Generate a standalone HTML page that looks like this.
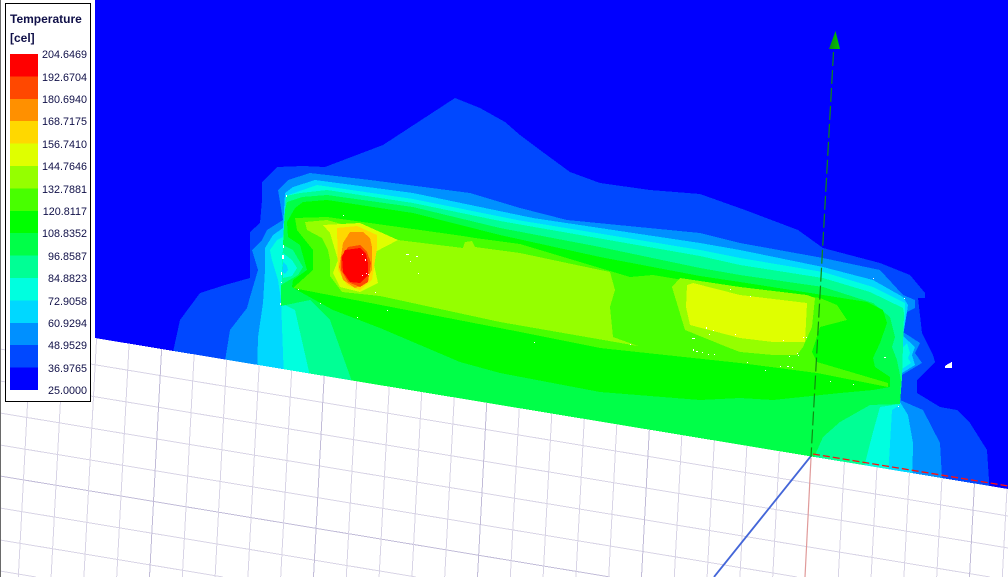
<!DOCTYPE html>
<html lang="en">
<head>
<meta charset="utf-8">
<title>Temperature plot</title>
<style>
html,body{margin:0;padding:0;background:#fff;width:1008px;height:577px;overflow:hidden}
svg{display:block}
.h polygon,.h rect{shape-rendering:crispEdges}
.g line{shape-rendering:crispEdges;stroke:#d8d4e6;stroke-width:1}
.g line.d{stroke:#c2bcd8}
text{font-family:"Liberation Sans",sans-serif;fill:#101048}
.l text{font-size:10.8px;text-anchor:end}
</style>
</head>
<body>
<svg width="1008" height="577" viewBox="0 0 1008 577" xmlns="http://www.w3.org/2000/svg">
<defs>
<clipPath id="fl"><polygon points="0,322 95,338 1008,489 1008,577 0,577"/></clipPath>
<linearGradient id="ah" x1="0" x2="1" y1="0" y2="0"><stop offset="0" stop-color="#0c8c10"/><stop offset="1" stop-color="#00c800"/></linearGradient>
</defs>
<rect width="1008" height="577" fill="#fff"/>
<g class="h">
<rect x="95" y="0" width="913" height="520" fill="#0000ff"/>
<!-- c1 -->
<polygon fill="#0048ff" points="173,370 173,352 180,320 200,293 225,285 250,278 250,232 260,223 262,200 262,182 277,167 303,166 325,167 383,145 455,98 480,108 505,122 520,135 540,150 570,172 600,183 650,190 700,194 745,210 798,230 823,248 880,263 910,275 925,293 925,298 918,298 922,333 933,355 935,362 917,380 917,393 940,407 957,410 970,423 987,450 990,495 700,460"/>
<!-- c2 -->
<polygon fill="#0090ff" points="225,370 225,361 230,330 247,308 250,297 258,270 252,250 262,240 267,230 283,220 278,190 288,180 310,173 370,180 470,193 520,208 567,220 700,233 740,243 823,258 880,270 903,295 915,300 915,308 905,313 903,332 920,343 915,353 922,363 902,375 900,400 923,410 940,443 943,495"/>
<!-- c3 -->
<polygon fill="#00d8ff" points="257,375 258,337 263,303 265,270 265,248 273,235 283,228 285,193 293,187 315,180 413,193 533,218 700,243 740,250 823,267 873,280 903,297 908,305 907,312 903,336 915,347 912,355 915,365 902,373 900,402 908,415 913,443 912,495"/>
<!-- c4 -->
<polygon fill="#00ffdf" points="284,380 281,300 278,280 272,260 270,250 277,240 283,237 288,195 297,192 317,185 413,199 517,220 700,250 740,258 823,272 873,287 905,303 905,312 902,348 907,343 910,353 908,358 911,363 902,369 900,405 892,410 887,495"/>
<!-- c5 -->
<polygon fill="#00ff95" points="312,385 295,310 281,303 283,245 284,228 286,196 300,193 327,190 413,203 500,221 700,256 740,265 823,278 870,292 903,308 904,313 902,378 900,404 880,407 873,432 862,475 700,470"/>
<!-- c3/c4 spot -->
<polygon fill="#00ffdf" points="283,253 292,260 297,268 292,276 283,278"/>
<polygon fill="#00d8ff" points="283,262 287,266 288,270 285,274 282,272"/>
<!-- c6 -->
<polygon fill="#00ff48" points="355,390 340,348 330,320 310,300 281,306 281,285 298,275 303,267 297,257 293,250 283,245 284,225 285,210 287,202 302,197 327,195 413,207 500,228 600,247 700,268 740,275 823,287 873,303 890,317 895,337 892,347 897,360 901,380 900,404 870,405 840,422 823,437 812,462"/>
<!-- c7 -->
<polygon fill="#00ff00" points="297,290 333,310 380,328 460,362 500,373 600,392 700,400 740,398 773,400 840,393 873,390 890,387 890,377 875,367 873,358 880,343 887,323 883,310 867,302 823,295 740,282 700,276 600,257 500,235 413,213 327,200 303,202 295,208 287,222 288,237 300,245 307,270 293,280 292,287"/>
<!-- c8 -->
<polygon fill="#48ff00" points="295,218 327,217 413,229 463,236 475,238 520,244 600,268 630,277 653,275 683,280 740,287 820,298 837,305 847,320 820,327 812,352 817,362 888,383 888,387 817,373 740,363 600,348 510,330 293,288 313,270 313,250 297,230"/>
<!-- c9 -->
<polygon fill="#95ff00" points="305,222 327,220 398,240 463,248 465,242 472,241 475,247 520,253 567,263 610,272 615,290 610,307 613,337 638,346 500,322 380,296 342,292 330,276 330,260 328,250 322,238 307,230"/>
<polygon fill="#95ff00" points="672,287 680,278 740,287 807,295 815,298 812,327 803,347 797,355 773,355 740,352 727,347 685,330"/>
<!-- c10 -->
<polygon fill="#dfff00" points="687,285 693,283 740,295 807,303 805,342 773,342 740,338 690,325 686,307"/>
<polygon fill="#dfff00" points="323,225 360,223 398,240 375,252 373,260 378,283 360,292 340,287 333,273 338,260 330,233"/>
<!-- hot spot -->
<polygon fill="#ffd800" points="337,228 357,226 377,235 377,248 372,280 360,290 347,285 338,270"/>
<polygon fill="#ff9000" points="350,232 363,232 370,238 372,247 372,270 363,285 355,288 343,280 339,267 342,250 343,243"/>
<polygon fill="#ff4800" points="348,247 360,245 367,252 371,263 368,282 360,287 348,282 341,270 341,257"/>
<polygon fill="#ff0000" points="345,250 360,248 366,254 368,263 368,275 360,283 350,282 343,272 342,257"/>
<!-- speckles -->
<g fill="#fff">
<rect x="286" y="195" width="1" height="2"/><rect x="343" y="215" width="1" height="1"/><rect x="283" y="245" width="1" height="3"/><rect x="282" y="255" width="2" height="4"/><rect x="281" y="272" width="1" height="3"/><rect x="281" y="282" width="1" height="1"/><rect x="280" y="303" width="1" height="2"/><rect x="298" y="289" width="1" height="1"/><rect x="320" y="303" width="1" height="1"/><rect x="357" y="317" width="1" height="1"/><rect x="387" y="310" width="1" height="1"/><rect x="362" y="254" width="1" height="1"/><rect x="365" y="259" width="1" height="2"/><rect x="362" y="275" width="1" height="1"/><rect x="366" y="273" width="1" height="1"/><rect x="368" y="274" width="1" height="1"/><rect x="375" y="292" width="1" height="1"/><rect x="406" y="254" width="3" height="1"/><rect x="416" y="256" width="2" height="1"/><rect x="410" y="261" width="1" height="1"/><rect x="418" y="273" width="1" height="1"/><rect x="630" y="344" width="1" height="1"/><rect x="534" y="342" width="1" height="1"/><rect x="693" y="349" width="1" height="2"/><rect x="730" y="289" width="1" height="1"/><rect x="750" y="296" width="1" height="1"/><rect x="706" y="327" width="1" height="2"/><rect x="713" y="330" width="1" height="1"/><rect x="709" y="334" width="1" height="1"/><rect x="692" y="338" width="3" height="1"/><rect x="735" y="334" width="1" height="1"/><rect x="783" y="340" width="1" height="1"/><rect x="696" y="351" width="2" height="1"/><rect x="702" y="352" width="1" height="1"/><rect x="708" y="354" width="1" height="1"/><rect x="714" y="354" width="1" height="1"/><rect x="747" y="362" width="1" height="1"/><rect x="780" y="366" width="1" height="1"/><rect x="787" y="366" width="2" height="1"/><rect x="792" y="367" width="1" height="1"/><rect x="765" y="370" width="1" height="1"/><rect x="830" y="381" width="1" height="1"/><rect x="853" y="384" width="1" height="1"/><rect x="789" y="356" width="1" height="1"/><rect x="798" y="355" width="1" height="1"/><rect x="797" y="353" width="1" height="1"/><rect x="803" y="337" width="1" height="1"/><rect x="806" y="337" width="1" height="1"/><rect x="873" y="278" width="1" height="1"/><rect x="904" y="298" width="1" height="1"/><rect x="884" y="357" width="2" height="1"/><rect x="898" y="406" width="1" height="1"/>
<polygon points="945,366 948,364 950,363 951,362 952,362 952,368 945,368"/>
</g>
</g>
<!-- floor -->
<polygon points="0,322 95,338 1008,489 1008,577 0,577" fill="#fff" style="shape-rendering:crispEdges"/>
<rect x="0" y="0" width="95" height="340" fill="#fff"/>
<g class="g" clip-path="url(#fl)">
<line x1="0" y1="349" x2="1008" y2="516"/><line x1="0" y1="381" x2="1008" y2="548"/><line x1="0" y1="413" x2="990" y2="577"/><line x1="0" y1="445" x2="797" y2="577"/><line class="d" x1="0" y1="476" x2="610" y2="577"/><line x1="0" y1="508" x2="416" y2="577"/><line x1="0" y1="540" x2="223" y2="577"/><line x1="0" y1="571" x2="36" y2="577"/>
<line x1="35.3" y1="257" x2="18.3" y2="577"/><line x1="68.1" y1="257" x2="51.1" y2="577"/><line x1="100.9" y1="257" x2="83.9" y2="577"/><line x1="133.7" y1="257" x2="116.7" y2="577"/><line class="d" x1="166.5" y1="257" x2="149.5" y2="577"/><line x1="199.3" y1="257" x2="182.3" y2="577"/><line x1="232.1" y1="257" x2="215.1" y2="577"/><line x1="264.9" y1="257" x2="247.9" y2="577"/><line x1="297.7" y1="257" x2="280.7" y2="577"/><line class="d" x1="330.5" y1="257" x2="313.5" y2="577"/><line x1="363.3" y1="257" x2="346.3" y2="577"/><line x1="396.1" y1="257" x2="379.1" y2="577"/><line x1="428.9" y1="257" x2="411.9" y2="577"/><line x1="461.7" y1="257" x2="444.7" y2="577"/><line class="d" x1="494.5" y1="257" x2="477.5" y2="577"/><line x1="527.3" y1="257" x2="510.3" y2="577"/><line x1="560.1" y1="257" x2="543.1" y2="577"/><line x1="592.9" y1="257" x2="575.9" y2="577"/><line x1="625.7" y1="257" x2="608.7" y2="577"/><line class="d" x1="658.5" y1="257" x2="641.5" y2="577"/><line x1="691.3" y1="257" x2="674.3" y2="577"/><line x1="724.1" y1="257" x2="707.1" y2="577"/><line x1="756.9" y1="257" x2="739.9" y2="577"/><line x1="789.7" y1="257" x2="772.7" y2="577"/><line x1="855.3" y1="257" x2="838.3" y2="577"/><line x1="888.1" y1="257" x2="871.1" y2="577"/><line x1="920.9" y1="257" x2="903.9" y2="577"/><line x1="953.7" y1="257" x2="936.7" y2="577"/><line class="d" x1="986.5" y1="257" x2="969.5" y2="577"/><line x1="1008" y1="470" x2="1002.3" y2="577"/>
</g>
<!-- axes -->
<line x1="811" y1="458" x2="805" y2="577" stroke="#e09a9a" stroke-width="1.2"/>
<line x1="811" y1="456" x2="714" y2="577" stroke="#4466d8" stroke-width="1.8"/>
<line x1="813" y1="454" x2="1008" y2="486" stroke="#ff0f0f" stroke-width="1.3" stroke-dasharray="7,3"/>
<line x1="833.5" y1="52" x2="811" y2="457" stroke="#108a10" stroke-width="1.2" stroke-dasharray="14,4"/>
<polygon points="835.5,31 829,49 840,49" fill="url(#ah)"/>
<!-- left edge -->
<rect x="0" y="0" width="1" height="577" fill="#6a6a6a"/>
<!-- legend -->
<rect x="5.5" y="3.5" width="85" height="398" fill="#fff" stroke="#000" stroke-width="1"/>
<g class="h">
<rect x="10" y="54" width="28" height="23" fill="#ff0000"/>
<rect x="10" y="76.4" width="28" height="23" fill="#ff4800"/>
<rect x="10" y="98.8" width="28" height="23" fill="#ff9000"/>
<rect x="10" y="121.2" width="28" height="23" fill="#ffd800"/>
<rect x="10" y="143.6" width="28" height="23" fill="#dfff00"/>
<rect x="10" y="166" width="28" height="23" fill="#95ff00"/>
<rect x="10" y="188.4" width="28" height="23" fill="#48ff00"/>
<rect x="10" y="210.8" width="28" height="23" fill="#00ff00"/>
<rect x="10" y="233.2" width="28" height="23" fill="#00ff48"/>
<rect x="10" y="255.6" width="28" height="23" fill="#00ff95"/>
<rect x="10" y="278" width="28" height="23" fill="#00ffdf"/>
<rect x="10" y="300.4" width="28" height="23" fill="#00d8ff"/>
<rect x="10" y="322.8" width="28" height="23" fill="#0090ff"/>
<rect x="10" y="345.2" width="28" height="23" fill="#0048ff"/>
<rect x="10" y="367.6" width="28" height="22.4" fill="#0000ff"/>
</g>
<text x="10" y="23" font-size="12" font-weight="700">Temperature</text>
<text x="10" y="42" font-size="12" font-weight="700">[cel]</text>
<g class="l">
<text x="87" y="58">204.6469</text>
<text x="87" y="81">192.6704</text>
<text x="87" y="103">180.6940</text>
<text x="87" y="125">168.7175</text>
<text x="87" y="148">156.7410</text>
<text x="87" y="170">144.7646</text>
<text x="87" y="193">132.7881</text>
<text x="87" y="215">120.8117</text>
<text x="87" y="237">108.8352</text>
<text x="87" y="260">96.8587</text>
<text x="87" y="282">84.8823</text>
<text x="87" y="305">72.9058</text>
<text x="87" y="327">60.9294</text>
<text x="87" y="349">48.9529</text>
<text x="87" y="372">36.9765</text>
<text x="87" y="394">25.0000</text>
</g>
</svg>
</body>
</html>
